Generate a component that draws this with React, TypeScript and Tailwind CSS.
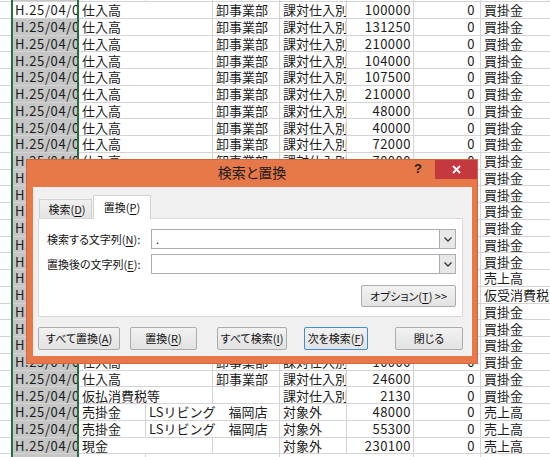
import React from 'react';

const GRID_FONT = "font-['Noto_Sans_CJK_JP','Liberation_Sans',sans-serif]";
const UI_FONT = "font-['Noto_Sans_CJK_JP','Liberation_Sans',sans-serif] [font-feature-settings:'palt']";

const D = 'H.25/04/01';
const buy = (amt: string): string[] => [D, '仕入高', '', '卸事業部', '課対仕入別', amt, '0', '買掛金', ''];
const sale = (amt: string): string[] => [D, '売掛金', 'LSリビング　福岡店', '', '対象外', amt, '0', '売上高', ''];

const ROWS: string[][] = [
  buy('100000'),
  buy('131250'),
  buy('210000'),
  buy('104000'),
  buy('107500'),
  buy('210000'),
  buy('48000'),
  buy('40000'),
  buy('72000'),
  buy('70000'),
  buy('95000'),
  buy('120000'),
  buy('36000'),
  buy('52500'),
  buy('84000'),
  buy('60000'),
  sale('150000'),
  [D, '売掛金', '', '', '対象外', '7500', '0', '仮受消費税', ''],
  buy('66000'),
  buy('38000'),
  buy('105000'),
  buy('10000'),
  buy('24600'),
  [D, '仮払消費税等', '', '', '課対仕入別', '2130', '0', '買掛金', ''],
  sale('48000'),
  sale('55300'),
  [D, '現金', '', '', '対象外', '230100', '0', '売上高', ''],
  [D, '売掛金', 'LSリビング　福岡店', '', '対象外', '', '', '仮受消費税', ''],
];

function SheetRow({ cells, active = false, short = false }: { cells: string[]; active?: boolean; short?: boolean }) {
  return (
    <div className={short ? 'flex shrink-0 h-[2px]' : 'flex shrink-0 h-[16.75px]'}>
      <div className="w-[12px] shrink-0 border-r border-b border-[#d4d4d4]" />
      {cells.map((text, i) => {
        const num = i === 5 || i === 6;
        // text runs on into an empty neighbour, as Excel does
        const spill = !num && text !== '' && cells[i + 1] === '';
        const bg = i === 0 && !active ? 'bg-[#c6c6c6]' : '';
        return (
          <div
            key={i}
            className={[
              'w-[67px] shrink-0 flex items-center whitespace-nowrap border-b border-[#d4d4d4]',
              spill ? 'overflow-visible relative z-[1]' : 'overflow-hidden border-r',
              num ? 'justify-end tracking-[0.5px]' : '',
              i === 0 ? 'tracking-[0.6px]' : '',
              i === 5 ? 'pr-[2px]' : i === 6 ? 'pr-[5px]' : 'pl-[3px]',
              bg,
            ].join(' ')}
          >
            {text}
          </div>
        );
      })}
    </div>
  );
}

function Sheet() {
  return (
    <div className={`relative flex flex-col bg-white ${GRID_FONT} text-[13px] leading-none text-[#1b1b1b]`}>
      <SheetRow cells={['', '', '', '', '', '', '', '', '']} short />
      {ROWS.map((r, i) => (
        <SheetRow key={i} cells={r} active={i === 0} />
      ))}
      {/* column selection outline */}
      <div className="absolute z-[2] left-[11px] top-0 w-[68px] h-[480px] border-x-2 border-[#217346]" />
    </div>
  );
}

function U({ children }: { children: React.ReactNode }) {
  return <span className="underline underline-offset-[2px]">{children}</span>;
}

function Combo({ value }: { value: string }) {
  return (
    <div className="flex-1 h-[20px] flex items-center border border-[#abadb3] bg-white">
      <span className="pl-[4px] flex-1 leading-none">{value}</span>
      <div className="w-[16px] h-full flex items-center justify-center bg-[#e8e8e8] border-l border-[#acacac]">
        <svg width="8" height="5" viewBox="0 0 8 5">
          <path d="M0.5 0.5 L4 4 L7.5 0.5" fill="none" stroke="#333" strokeWidth="1.3" />
        </svg>
      </div>
    </div>
  );
}

function Btn({ className, focus = false, children }: { className: string; focus?: boolean; children: React.ReactNode }) {
  return (
    <div
      className={[
        'h-[23px] shrink-0 flex items-center justify-center rounded-[2px] bg-gradient-to-b from-[#f2f2f2] to-[#e2e2e2] leading-none',
        focus ? 'border border-[#3c8ed8]' : 'border border-[#acacac]',
        className,
      ].join(' ')}
    >
      {children}
    </div>
  );
}

function ReplaceDialog() {
  return (
    <div className={`absolute z-10 left-[26px] top-[159px] w-[452px] h-[205px] flex flex-col bg-[#e7784a] border border-[#cf683e] ${UI_FONT} text-[#111]`}>
      {/* title bar */}
      <div className="h-[27px] shrink-0 flex items-start">
        <div className="w-[76px] shrink-0" />
        <div className="flex-1 pt-[3px] text-center text-[14px] leading-[18px] text-[#1a1a1a]">検索と置換</div>
        <div className="w-[76px] shrink-0 flex">
          <div className="w-[34px] h-[17px] flex items-center justify-center font-['Liberation_Sans',sans-serif] font-bold text-[13px] text-[#222]">?</div>
          <div className="w-[42px] h-[19px] flex items-center justify-center bg-[#c4383f]">
            <svg width="9" height="9" viewBox="0 0 9 9">
              <path d="M1 1 L8 8 M8 1 L1 8" stroke="#fff" strokeWidth="1.8" />
            </svg>
          </div>
        </div>
      </div>

      {/* client area */}
      <div className="flex-1 ml-[6px] mr-[5px] mb-[7px] bg-[#f0f0f0] flex flex-col pl-[5px] pt-[8px] text-[11px]">
        {/* tabs */}
        <div className="h-[23px] flex items-end pl-[1px]">
          <div className="w-[53px] h-[19px] flex items-center justify-center pl-[3px] bg-gradient-to-b from-[#f0f0f0] to-[#e4e4e4] border border-b-0 border-[#d2d2d2] leading-none">
            検索(<U>D</U>)
          </div>
          <div className="relative z-10 ml-[1px] -mb-[1px] w-[58px] h-[24px] flex items-center justify-center bg-white border border-b-0 border-[#d2d2d2] leading-none">
            置換(<U>P</U>)
          </div>
        </div>

        {/* panel */}
        <div className="w-[425px] h-[99px] bg-white border border-[#d9d9d9] flex flex-col pt-[10px] pl-[8px] pr-[6px]">
          <div className="flex items-center">
            <div className="w-[104px] shrink-0 leading-none">
              検索する文字列(<U>N</U>):
            </div>
            <Combo value="." />
          </div>
          <div className="flex items-center mt-[5px]">
            <div className="w-[104px] shrink-0 leading-none">
              置換後の文字列(<U>E</U>):
            </div>
            <Combo value="" />
          </div>
          <div className="flex justify-end mt-[11px]">
            <Btn className="w-[95px] !h-[22px]">
              オプション(<U>T</U>) &gt;&gt;
            </Btn>
          </div>
        </div>

        {/* bottom buttons */}
        <div className="flex mt-[10px]">
          <Btn className="w-[82px]">
            すべて置換(<U>A</U>)
          </Btn>
          <Btn className="w-[67px] ml-[10px]">
            置換(<U>R</U>)
          </Btn>
          <Btn className="w-[70px] ml-[20px]">
            すべて検索(<U>I</U>)
          </Btn>
          <Btn className="w-[64px] ml-[17px]" focus>
            次を検索(<U>F</U>)
          </Btn>
          <Btn className="w-[68px] ml-[27px]">閉じる</Btn>
        </div>
      </div>
    </div>
  );
}

export default function App() {
  return (
    <div className="relative w-[550px] h-[457px] overflow-hidden bg-white">
      <Sheet />
      <ReplaceDialog />
    </div>
  );
}
